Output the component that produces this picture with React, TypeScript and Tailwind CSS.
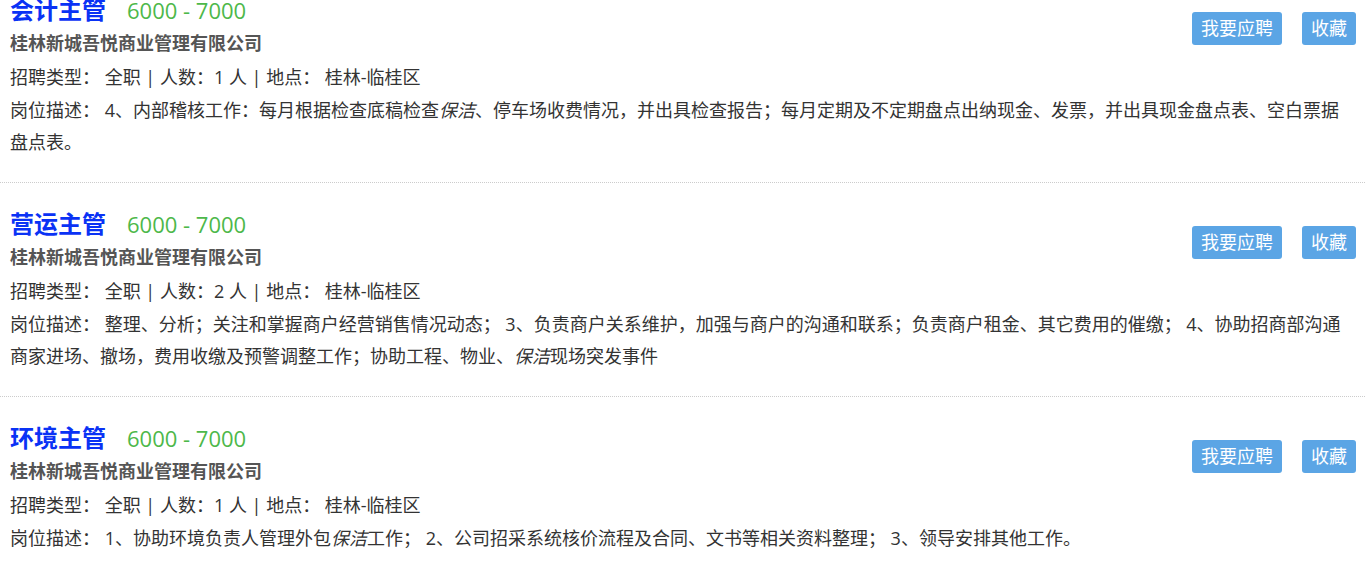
type Job = {
  id: number;
  title: string;
  salary: string;
  company: string;
  type: string;
  count: number;
  place: string;
  desc: (string | { em: string })[];
};

const jobs: Job[] = [
  {
    id: 1,
    title: "会计主管",
    salary: "6000 - 7000",
    company: "桂林新城吾悦商业管理有限公司",
    type: "全职",
    count: 1,
    place: "桂林-临桂区",
    desc: [
      "4、内部稽核工作：每月根据检查底稿检查",
      { em: "保洁" },
      "、停车场收费情况，并出具检查报告；每月定期及不定期盘点出纳现金、发票，并出具现金盘点表、空白票据盘点表。",
    ],
  },
  {
    id: 2,
    title: "营运主管",
    salary: "6000 - 7000",
    company: "桂林新城吾悦商业管理有限公司",
    type: "全职",
    count: 2,
    place: "桂林-临桂区",
    desc: [
      "整理、分析；关注和掌握商户经营销售情况动态； 3、负责商户关系维护，加强与商户的沟通和联系；负责商户租金、其它费用的催缴； 4、协助招商部沟通商家进场、撤场，费用收缴及预警调整工作；协助工程、物业、",
      { em: "保洁" },
      "现场突发事件",
    ],
  },
  {
    id: 3,
    title: "环境主管",
    salary: "6000 - 7000",
    company: "桂林新城吾悦商业管理有限公司",
    type: "全职",
    count: 1,
    place: "桂林-临桂区",
    desc: [
      "1、协助环境负责人管理外包",
      { em: "保洁" },
      "工作； 2、公司招采系统核价流程及合同、文书等相关资料整理； 3、领导安排其他工作。",
    ],
  },
];

function JobItem({ job }: { job: Job }) {
  return (
    <li className="border-t border-dotted border-[#cccccc] pl-[10px] pr-[9px] pt-[19px] pb-[24px]">
      <div className="flex items-start justify-between">
        <div>
          <div className="h-[39px] whitespace-nowrap pt-[3px] leading-[37px]">
            <span className="text-[24px] font-bold text-[#0a32f5]">{job.title}</span>
            <span className="ml-[21px] text-[22px] text-[#4db84a]">{job.salary}</span>
          </div>
          <div className="text-[18px] font-bold leading-[33px] text-[#555555]">{job.company}</div>
          <div className="text-[18px] leading-[34px] text-[#333333]">
            招聘类型： 全职 | 人数：{job.count} 人 | 地点： {job.place}
          </div>
        </div>
        <div className="mt-[24px] flex gap-[20px]">
          <button className="h-[33px] rounded-[3px] bg-[#5ba5e5] px-[9px] text-[18px] leading-[33px] text-white">
            我要应聘
          </button>
          <button className="h-[33px] rounded-[3px] bg-[#5ba5e5] px-[9px] text-[18px] leading-[33px] text-white">
            收藏
          </button>
        </div>
      </div>
      <p className="pr-[1px] text-[18px] leading-[32px] text-[#333333]">
        岗位描述：{" "}
        {job.desc.map((d, i) =>
          typeof d === "string" ? <span key={i}>{d}</span> : <em key={i}>{d.em}</em>
        )}
      </p>
    </li>
  );
}

export default function App() {
  return (
    <div
      className="min-h-screen overflow-hidden bg-white"
      style={{ fontFamily: '"Open Sans", "Noto Sans CJK SC", sans-serif' }}
    >
      <ul className="-mt-[32px]">
        {jobs.map((job) => (
          <JobItem key={job.id} job={job} />
        ))}
      </ul>
    </div>
  );
}
